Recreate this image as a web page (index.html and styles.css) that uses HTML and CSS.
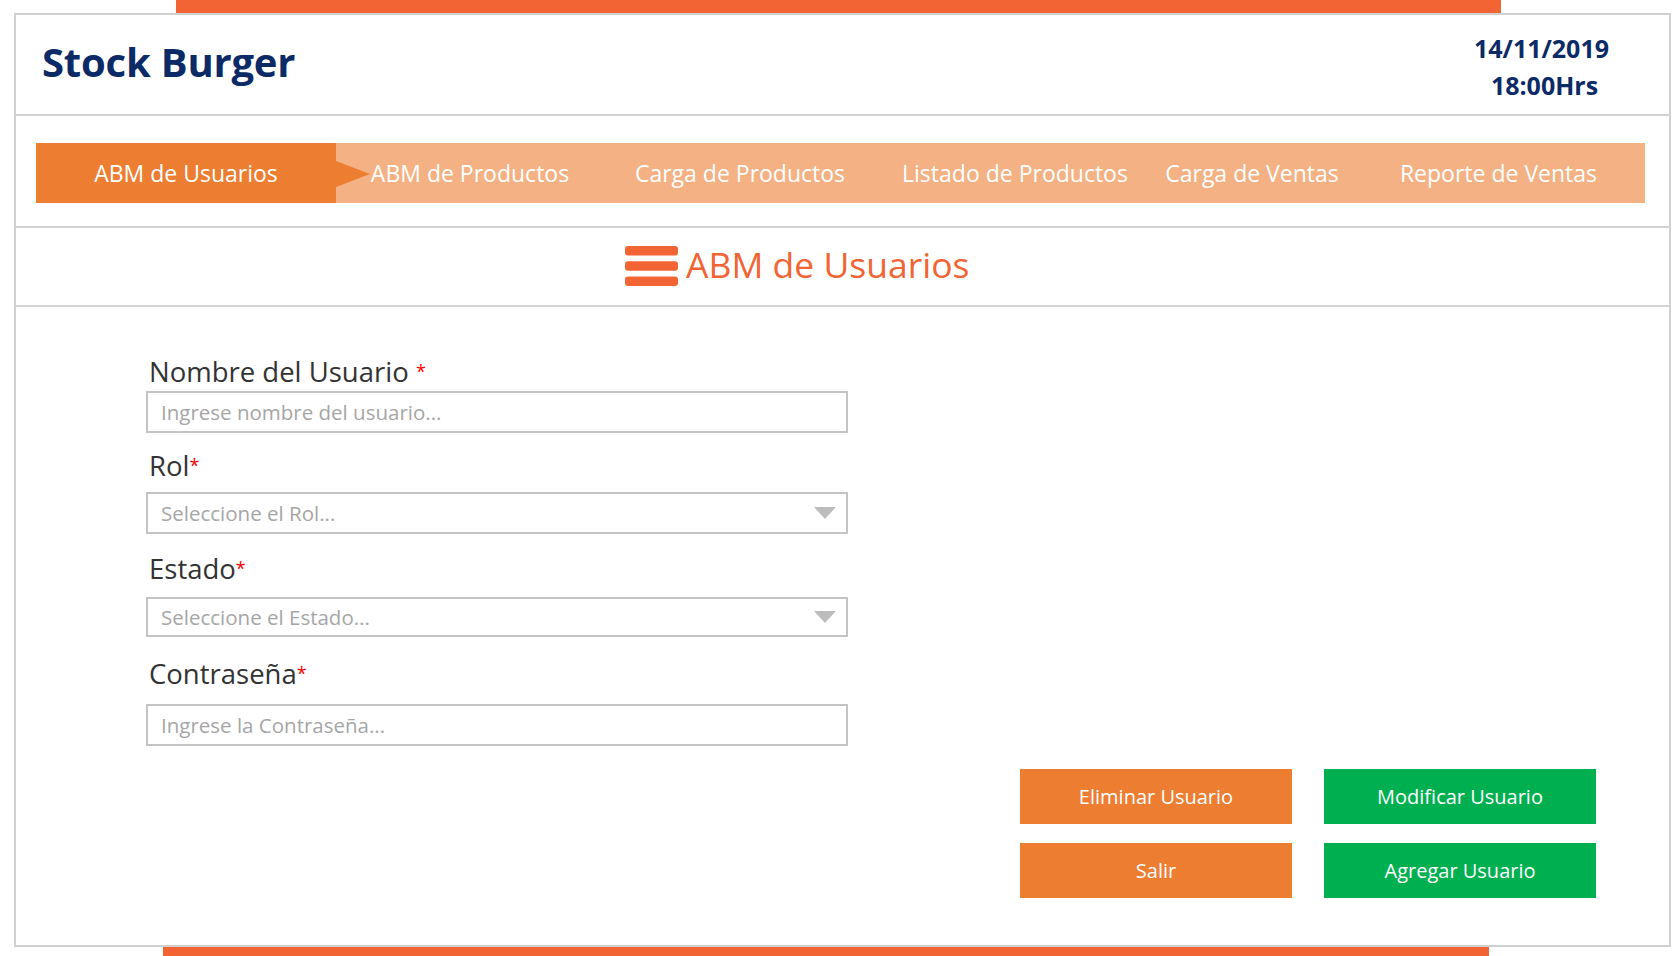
FILE: index.html
```html
<!DOCTYPE html>
<html lang="es">
<head>
<meta charset="utf-8">
<title>Stock Burger - ABM de Usuarios</title>
<link rel="stylesheet" href="styles.css">
</head>
<body>
<div class="topbar"></div>
<div class="frame">
  <header class="header">
    <h1 class="brand">Stock Burger</h1>
    <div class="datetime">
      <div>14/11/2019</div>
      <div class="time">18:00Hrs</div>
    </div>
  </header>
  <nav class="nav">
    <ul class="tabs">
      <li class="tab tab-active tab-w1">ABM de Usuarios</li>
      <li class="tab tab-w2">ABM de Productos</li>
      <li class="tab tab-w3">Carga de Productos</li>
      <li class="tab tab-w4">Listado de Productos</li>
      <li class="tab tab-w5">Carga de Ventas</li>
      <li class="tab tab-w6">Reporte de Ventas</li>
    </ul>
  </nav>
  <div class="section-title">
    <svg class="menu-icon" width="53" height="40" viewBox="0 0 53 40" aria-hidden="true">
      <rect x="0" y="0" width="53" height="9.5" rx="3" fill="#f26433"/>
      <rect x="0" y="15.25" width="53" height="9.5" rx="3" fill="#f26433"/>
      <rect x="0" y="30.5" width="53" height="9.5" rx="3" fill="#f26433"/>
    </svg>
    <h2 class="title">ABM de Usuarios</h2>
  </div>
  <main class="content">
    <form class="fields">
      <div class="field field-name">
        <label class="label">Nombre del Usuario <span class="req">*</span></label>
        <div class="control"><span class="placeholder">Ingrese nombre del usuario...</span></div>
      </div>
      <div class="field field-rol">
        <label class="label">Rol<span class="req">*</span></label>
        <div class="control control-select"><span class="placeholder">Seleccione el Rol...</span><span class="caret"></span></div>
      </div>
      <div class="field field-estado">
        <label class="label">Estado<span class="req">*</span></label>
        <div class="control control-select control-short"><span class="placeholder">Seleccione el Estado...</span><span class="caret"></span></div>
      </div>
      <div class="field field-pass">
        <label class="label">Contraseña<span class="req">*</span></label>
        <div class="control"><span class="placeholder">Ingrese la Contraseña...</span></div>
      </div>
    </form>
    <div class="actions">
      <button class="btn btn-orange" type="button">Eliminar Usuario</button>
      <button class="btn btn-green" type="button">Modificar Usuario</button>
      <button class="btn btn-orange" type="button">Salir</button>
      <button class="btn btn-green" type="button">Agregar Usuario</button>
    </div>
  </main>
</div>
<div class="bottombar"></div>
</body>
</html>
```

FILE: styles.css
```css
* { box-sizing: border-box; }

html, body {
  margin: 0;
  padding: 0;
  background: #ffffff;
}

body {
  width: 1672px;
  height: 956px;
  overflow: hidden;
  font-family: "Open Sans", "Noto Sans", sans-serif;
  color: #333333;
}

.topbar {
  margin-left: 176px;
  width: 1325px;
  height: 13px;
  background: #f26433;
}

.bottombar {
  margin-left: 163px;
  width: 1326px;
  height: 9px;
  background: #f26433;
}

.frame {
  margin-left: 14px;
  width: 1657px;
  height: 934px;
  border: 2px solid #d0d0d0;
  display: flex;
  flex-direction: column;
}

/* Header */
.header {
  height: 101px;
  border-bottom: 2px solid #d3d3d3;
  display: flex;
  align-items: center;
  justify-content: space-between;
  padding: 0 60px 0 26px;
}

.brand {
  margin: 0;
  font-size: 40px;
  font-weight: 700;
  color: #0b2a66;
  letter-spacing: -0.2px;
  padding-bottom: 6px;
}

.datetime {
  text-align: center;
  font-size: 25px;
  font-weight: 700;
  color: #0b2a66;
  line-height: 37px;
  padding-top: 4px;
  padding-left: 4px;
}

.time {
  padding-left: 6px;
}

/* Navigation */
.nav {
  height: 112px;
  border-bottom: 2px solid #d3d3d3;
  padding: 27px 24px 0 20px;
}

.tabs {
  list-style: none;
  margin: 0;
  padding: 0;
  display: flex;
  height: 60px;
  background: #f4b183;
}

.tab {
  position: relative;
  display: flex;
  align-items: center;
  justify-content: center;
  height: 60px;
  font-size: 23px;
  color: #ffffff;
  white-space: nowrap;
}

.tab-active {
  background: #ed7d31;
}

.tab-active::after {
  content: "";
  position: absolute;
  left: 100%;
  top: 18px;
  border-left: 34px solid #ed7d31;
  border-top: 13px solid transparent;
  border-bottom: 13px solid transparent;
}

.tab-w1 { width: 300px; }
.tab-w2 { width: 266px; padding-left: 2px; }
.tab-w3 { width: 276px; }
.tab-w4 { width: 274px; }
.tab-w5 { width: 200px; }
.tab-w6 { width: 293px; }

/* Section title */
.section-title {
  height: 79px;
  border-bottom: 2px solid #d3d3d3;
  display: flex;
  align-items: center;
  padding-left: 609px;
  padding-bottom: 2px;
  gap: 8px;
}

.menu-icon {
  flex: none;
}

.title {
  margin: 0;
  font-size: 35.5px;
  font-weight: 400;
  color: #f26433;
  line-height: 40px;
  padding-bottom: 3px;
}

/* Content */
.content {
  flex: 1;
  display: flex;
  padding-top: 46px;
}

.fields {
  margin: 0 0 0 130px;
  width: 702px;
}

.label {
  display: block;
  font-size: 27.5px;
  line-height: 36px;
  color: #333333;
  padding-left: 3px;
}

.field-name .label { margin-bottom: 1px; }
.field-rol { margin-top: 14px; }
.field-rol .label { margin-bottom: 8px; }
.field-estado { margin-top: 16px; }
.field-estado .label { margin-bottom: 10px; }
.field-pass { margin-top: 18px; }
.field-pass .label { margin-bottom: 12px; }

.req {
  color: #ff0000;
  font-size: 18px;
  vertical-align: 4px;
}

.control {
  position: relative;
  height: 42px;
  border: 2px solid #c4c4c4;
  display: flex;
  align-items: center;
  padding-left: 13px;
}

.control-short {
  height: 40px;
}

.placeholder {
  font-size: 20.5px;
  color: #a6a6a6;
}

.caret {
  position: absolute;
  right: 10px;
  top: 50%;
  margin-top: -6px;
  border-top: 12px solid #bdbdbd;
  border-left: 11.5px solid transparent;
  border-right: 11.5px solid transparent;
}

/* Actions */
.actions {
  margin-left: auto;
  margin-right: 73px;
  margin-bottom: 47px;
  align-self: flex-end;
  display: grid;
  grid-template-columns: 272px 272px;
  grid-auto-rows: 55px;
  column-gap: 32px;
  row-gap: 19px;
}

.btn {
  border: 0;
  margin: 0;
  padding: 0;
  font-family: inherit;
  font-size: 20px;
  color: #ffffff;
  cursor: pointer;
}

.btn-orange { background: #ed7d31; }
.btn-green { background: #00b050; }
```
